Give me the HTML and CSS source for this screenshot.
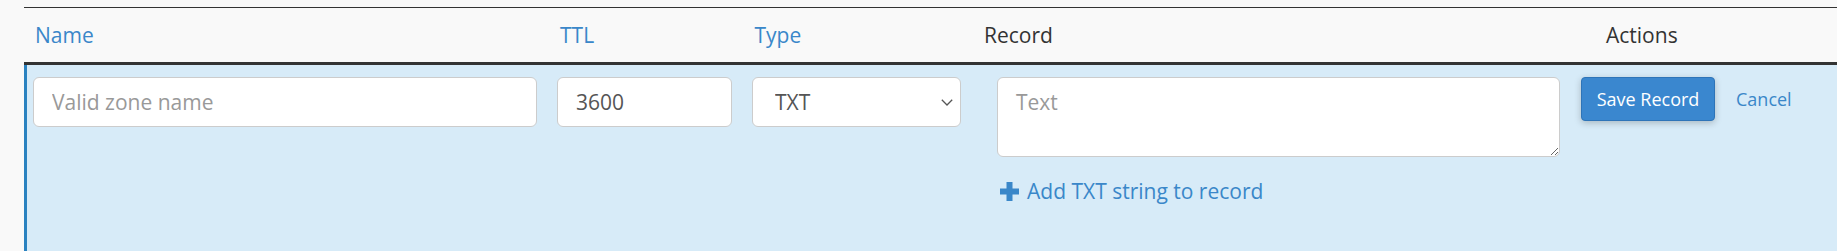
FILE: index.html
```html
<!DOCTYPE html>
<html lang="en">
<head>
<meta charset="utf-8">
<title>Zone Editor</title>
<link rel="stylesheet" href="styles.css">
</head>
<body>
<div class="zone-table">
  <div class="thead">
    <div class="th th-name"><a class="sort-link" href="#">Name</a></div>
    <div class="th th-ttl"><a class="sort-link" href="#">TTL</a></div>
    <div class="th th-type"><a class="sort-link" href="#">Type</a></div>
    <div class="th th-record">Record</div>
    <div class="th th-actions">Actions</div>
  </div>
  <div class="edit-row">
    <input class="field field-name" type="text" placeholder="Valid zone name">
    <input class="field field-ttl" type="text" value="3600">
    <div class="select-wrap">
      <select class="field field-type">
        <option>TXT</option>
      </select>
      <svg class="chevron" width="12" height="7" viewBox="0 0 12 7"><path d="M0.8 0.8 L6 6 L11.2 0.8" fill="none" stroke="#555" stroke-width="1.3"/></svg>
    </div>
    <div class="record-cell">
      <textarea class="field field-record" placeholder="Text"></textarea>
      <a class="add-link" href="#">
        <svg class="plus" width="19" height="19" viewBox="0 0 19 19"><path d="M6.5 0 H12.5 V6.5 H19 V12.5 H12.5 V19 H6.5 V12.5 H0 V6.5 H6.5 Z" fill="#3a87c9"/></svg>
        <span>Add TXT string to record</span>
      </a>
    </div>
    <div class="actions">
      <button class="btn-save" type="button">Save Record</button>
      <a class="btn-cancel" href="#">Cancel</a>
    </div>
  </div>
</div>
</body>
</html>
```
FILE: styles.css
```css
html, body {
  margin: 0;
  padding: 0;
  height: 251px;
  overflow: hidden;
  background: #f9f9f9;
  font-family: "Open Sans", "Noto Sans", sans-serif;
  color: #333;
}

.zone-table {
  margin-left: 24px;
  padding-top: 7px;
}

.thead {
  display: grid;
  grid-template-columns: 536px 194.5px 229.5px 622px 1fr;
  align-items: center;
  height: 54px;
  border-top: 1px solid #333;
  border-bottom: 3px solid #333;
  background: #f9f9f9;
  font-size: 21px;
}

.th-name {
  padding-left: 11px;
}

.sort-link {
  color: #3a87c9;
  text-decoration: none;
}

.edit-row {
  box-sizing: border-box;
  display: flex;
  align-items: flex-start;
  height: 186px;
  padding: 12px 0 0 6px;
  border-left: 3px solid #2a82c0;
  background: #d7ebf8;
}

.field {
  box-sizing: border-box;
  height: 50px;
  margin: 0;
  padding: 0 18px;
  border: 1.5px solid #ccc;
  border-radius: 6px;
  background: #fff;
  font-family: "Open Sans", "Noto Sans", sans-serif;
  font-size: 21px;
  color: #555;
  outline: none;
}

.field::placeholder {
  color: #999;
}

.field-name {
  width: 504px;
  margin-right: 20px;
}

.field-ttl {
  width: 175px;
  margin-right: 20px;
}

.select-wrap {
  position: relative;
  width: 209px;
  margin-right: 36px;
}

.field-type {
  width: 209px;
  padding-left: 22px;
  -webkit-appearance: none;
  appearance: none;
}

.chevron {
  position: absolute;
  right: 8px;
  top: 22px;
}

.record-cell {
  display: flex;
  flex-direction: column;
  width: 563px;
  margin-right: 21px;
}

.field-record {
  width: 563px;
  height: 80px;
  padding: 9px 18px;
  line-height: 30px;
  resize: vertical;
  display: block;
}

.add-link {
  display: flex;
  align-items: center;
  margin-top: 19px;
  padding-left: 3px;
  height: 30px;
  font-size: 21px;
  color: #3a87c9;
  text-decoration: none;
}

.plus {
  margin-right: 8px;
}

.actions {
  display: flex;
  align-items: center;
}

.btn-save {
  box-sizing: border-box;
  width: 134px;
  height: 44px;
  margin: 0 21px 0 0;
  padding: 0;
  border: 1.5px solid #2e74b8;
  border-radius: 4px;
  background: #3a87cf;
  box-shadow: 0 2px 7px rgba(0, 0, 0, 0.22);
  color: #fff;
  font-family: "Open Sans", "Noto Sans", sans-serif;
  font-size: 18px;
}

.btn-cancel {
  font-size: 18px;
  color: #3a87c9;
  text-decoration: none;
}
```
